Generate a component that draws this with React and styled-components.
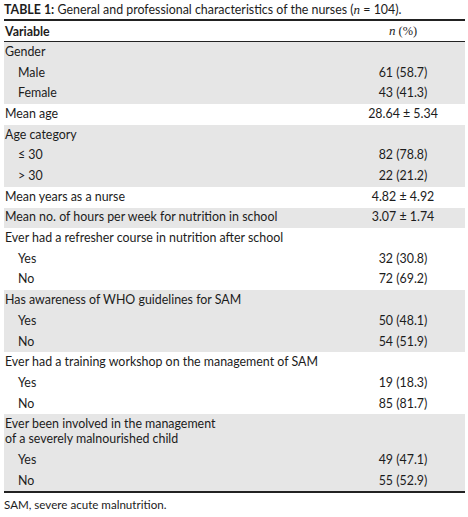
import React from "react";
import styled, { createGlobalStyle } from "styled-components";

const Global = createGlobalStyle`
  body {
    margin: 0;
    background: #fff;
    font-family: Lato, "Open Sans", sans-serif;
    color: #1c1c1c;
  }
`;

const groups = [
  { shade: true, rows: [["Gender"], ["Male", "61 (58.7)", 1], ["Female", "43 (41.3)", 1]] },
  { shade: false, rows: [["Mean age", "28.64 ± 5.34"]] },
  { shade: true, rows: [["Age category"], ["≤ 30", "82 (78.8)", 1], ["> 30", "22 (21.2)", 1]] },
  { shade: false, rows: [["Mean years as a nurse", "4.82 ± 4.92"]] },
  { shade: true, rows: [["Mean no. of hours per week for nutrition in school", "3.07 ± 1.74"]] },
  {
    shade: false,
    rows: [
      ["Ever had a refresher course in nutrition after school"],
      ["Yes", "32 (30.8)", 1],
      ["No", "72 (69.2)", 1],
    ],
  },
  {
    shade: true,
    rows: [["Has awareness of WHO guidelines for SAM"], ["Yes", "50 (48.1)", 1], ["No", "54 (51.9)", 1]],
  },
  {
    shade: false,
    rows: [
      ["Ever had a training workshop on the management of SAM"],
      ["Yes", "19 (18.3)", 1],
      ["No", "85 (81.7)", 1],
    ],
  },
  {
    shade: true,
    rows: [
      ["Ever been involved in the management\nof a severely malnourished child"],
      ["Yes", "49 (47.1)", 1],
      ["No", "55 (52.9)", 1],
    ],
  },
];

function App() {
  return (
    <>
      <Global />
      <Page>
        <Caption>
          <b>TABLE 1:</b> General and professional characteristics of the nurses (<Ital>n</Ital> = 104).
        </Caption>
        <Table>
          <Head>
            <HeadLabel>Variable</HeadLabel>
            <HeadValue>
              <Ital>n</Ital> (%)
            </HeadValue>
          </Head>
          {groups.map((g, gi) => (
            <Group key={gi} $shade={g.shade}>
              {g.rows.map(([label, value, indent], ri) => (
                <Row key={ri}>
                  <Label $indent={indent}>{label}</Label>
                  <Value>{value || ""}</Value>
                </Row>
              ))}
            </Group>
          ))}
        </Table>
        <Note>SAM, severe acute malnutrition.</Note>
      </Page>
    </>
  );
}

export default App;

const Page = styled.div`
  width: 468px;
  height: 517px;
  padding: 0 3px 0 4px;
  box-sizing: border-box;
`;

const Caption = styled.div`
  font-size: 12.4px;
  line-height: 18px;
  padding-top: 1px;
  white-space: nowrap;
  b {
    font-weight: 700;
  }
`;

const Ital = styled.i`
  font-family: "Liberation Serif", serif;
  font-style: italic;
  font-size: 1.05em;
`;

const Table = styled.div`
  border-top: 2px solid #222;
  border-bottom: 2px solid #222;
`;

const Head = styled.div`
  display: grid;
  grid-template-columns: 1fr 124px;
  align-items: center;
  height: 20px;
  border-bottom: 1px solid #222;
  font-size: 12.4px;
`;

const HeadLabel = styled.div`
  font-weight: 700;
  padding-left: 1px;
`;

const HeadValue = styled.div`
  text-align: center;
  font-family: "Liberation Serif", serif;
  font-size: 12.4px;
`;

const Group = styled.div`
  background: ${(p) => (p.$shade ? "#e6e6e6" : "#fff")};
`;

const Row = styled.div`
  display: grid;
  grid-template-columns: 1fr 124px;
  align-items: end;
  font-size: 12.4px;
  line-height: 14.9px;
  padding: 2.9px 0;
`;

const Label = styled.div`
  white-space: pre-line;
  padding-left: ${(p) => (p.$indent ? "14px" : "1px")};
`;

const Value = styled.div`
  text-align: center;
`;

const Note = styled.div`
  font-size: 11.6px;
  padding-top: 5px;
`;
